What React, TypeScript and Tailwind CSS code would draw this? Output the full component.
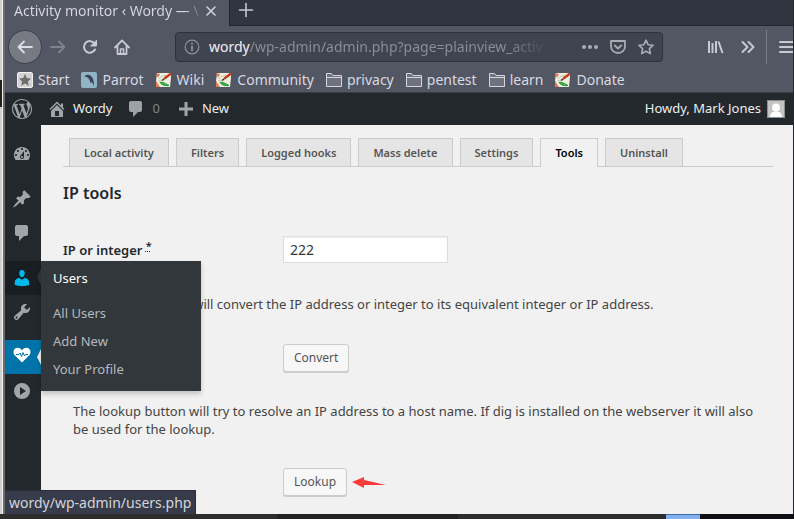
import type { ReactNode } from "react";

const ICON = {
  wordpress:
    "M20 10c0-5.51-4.49-10-10-10C4.48 0 0 4.49 0 10c0 5.52 4.48 10 10 10 5.51 0 10-4.48 10-10zM7.78 15.37L4.37 6.22c.55-.02 1.17-.08 1.17-.08.5-.06.44-1.13-.06-1.11 0 0-1.45.11-2.37.11-.18 0-.37 0-.58-.01C4.12 2.69 6.87 1.11 10 1.11c2.33 0 4.45.87 6.05 2.34-.68-.11-1.65.39-1.65 1.58 0 .74.45 1.36.9 2.1.35.61.55 1.36.55 2.46 0 1.49-1.4 5-1.4 5l-3.03-8.37c.54-.02.82-.17.82-.17.5-.05.44-1.25-.06-1.22 0 0-1.44.12-2.38.12-.87 0-2.33-.12-2.33-.12-.5-.03-.56 1.2-.06 1.22l.92.08 1.26 3.41zM17.41 10c.24-.64.74-1.87.43-4.25.7 1.29 1.05 2.71 1.05 4.25 0 3.29-1.73 6.24-4.4 7.78.97-2.59 1.94-5.2 2.92-7.78zM6.1 18.09C3.12 16.65 1.11 13.53 1.11 10c0-1.3.23-2.48.72-3.59C3.25 10.3 4.67 14.2 6.1 18.09zm4.03-6.63l2.58 6.98c-.86.29-1.76.45-2.71.45-.79 0-1.57-.11-2.29-.33.81-2.38 1.62-4.74 2.42-7.1z",
  home: "M16 8.5l1.53 1.53-1.06 1.06L10 4.6l-6.47 6.49-1.06-1.06L10 2.5l4 4v-2h2v4zm-6-2.46l6 5.99V18H4v-5.97zM12 17v-5H8v5h4z",
  comment:
    "M5 2h9c1.1 0 2 .9 2 2v7c0 1.1-.9 2-2 2h-2l-5 5v-5H5c-1.1 0-2-.9-2-2V4c0-1.1.9-2 2-2z",
  plus: "M17 8.5v3h-5.5V17h-3v-5.500H3v-3h5.500V3h3v5.500H17z",
  dashboard:
    "M3.76 16h12.48c1.1-1.37 1.76-3.11 1.76-5 0-4.42-3.58-8-8-8s-8 3.58-8 8c0 1.89.66 3.63 1.76 5zM10 4c.55 0 1 .45 1 1s-.45 1-1 1-1-.45-1-1 .45-1 1-1zM6 6c.55 0 1 .45 1 1s-.45 1-1 1-1-.45-1-1 .45-1 1-1zm8 0c.55 0 1 .45 1 1s-.45 1-1 1-1-.45-1-1 .45-1 1-1zm-5.37 5.55L12 7v6c0 1.1-.9 2-2 2s-2-.9-2-2c0-.57.24-1.08.63-1.45zM4 10c.55 0 1 .45 1 1s-.45 1-1 1-1-.45-1-1 .45-1 1-1zm12 0c.55 0 1 .45 1 1s-.45 1-1 1-1-.45-1-1 .45-1 1-1zm-5 3c0-.55-.45-1-1-1s-1 .45-1 1 .45 1 1 1 1-.45 1-1z",
  pin: "M10.44 3.02l1.82-1.82 6.36 6.35-1.83 1.82c-1.05-.68-2.48-.57-3.41.36l-.75.75c-.92.93-1.04 2.35-.35 3.41l-1.83 1.82-2.41-2.41-2.8 2.79c-.42.42-3.38 2.71-3.8 2.29s1.86-3.39 2.28-3.81l2.79-2.79L4.1 9.36l1.83-1.82c1.05.69 2.48.57 3.4-.36l.75-.75c.93-.92 1.05-2.35.36-3.41z",
  users:
    "M10 9.25c-2.27 0-2.73-3.44-2.73-3.44C7 4.02 7.82 2 9.97 2c2.16 0 2.98 2.02 2.71 3.81 0 0-.41 3.44-2.68 3.44zm0 2.57L12.72 10c2.39 0 4.52 2.33 4.52 4.53v2.49s-3.65 1.13-7.24 1.13c-3.65 0-7.24-1.13-7.24-1.13v-2.49c0-2.25 1.94-4.48 4.47-4.48z",
  tools:
    "M16.68 9.77c-1.34 1.34-3.3 1.67-4.95.99l-5.41 6.52c-.99.99-2.59.99-3.58 0s-.99-2.59 0-3.57l6.52-5.42c-.68-1.65-.35-3.61.99-4.95 1.28-1.28 3.12-1.62 4.72-1.06l-2.89 2.89 2.82 2.82 2.86-2.87c.53 1.58.18 3.39-1.08 4.65zM3.81 16.21c.4.39 1.04.39 1.43 0 .4-.4.4-1.04 0-1.43-.39-.4-1.03-.4-1.43 0-.39.39-.39 1.03 0 1.43z",
};

function Dash({ d, className = "size-5" }: { d: string; className?: string }) {
  return (
    <svg viewBox="0 0 20 20" fill="currentColor" className={`shrink-0 ${className}`} aria-hidden="true">
      <path d={d} fillRule="evenodd" />
    </svg>
  );
}

function Line({ children, className = "size-4", width = 2 }: { children: ReactNode; className?: string; width?: number }) {
  return (
    <svg
      viewBox="0 0 16 16"
      fill="none"
      stroke="currentColor"
      strokeWidth={width}
      strokeLinecap="round"
      strokeLinejoin="round"
      className={`shrink-0 ${className}`}
      aria-hidden="true"
    >
      {children}
    </svg>
  );
}

function StartIcon() {
  return (
    <svg viewBox="0 0 16 16" className="size-4 shrink-0" aria-hidden="true">
      <rect x="0.500" y="0.500" width="15" height="15" rx="1.500" fill="#d3d3d3" stroke="#f0f0f0" />
      <path d="M8 2l1.800 4 4.200.5-3.100 2.900.9 4.300L8 11.500l-3.800 2.200.9-4.300L2 6.500 6.200 6z" fill="#6e6e6e" />
    </svg>
  );
}

function ParrotIcon() {
  return (
    <svg viewBox="0 0 16 16" className="size-4 shrink-0" aria-hidden="true">
      <rect width="16" height="16" rx="2" fill="#8fb4c6" />
      <path d="M3 4.500c2-2 5-2.500 7-.5 2.500 2 3 6 3 10-.8-2-1.600-3.200-2.600-4l-.6 1.500C9 8.500 8 6.500 6.500 5.500 5.500 4.800 4 4.500 3 4.500z" fill="#3b4554" />
    </svg>
  );
}

function NoteIcon() {
  return (
    <svg viewBox="0 0 16 16" className="size-4 shrink-0" aria-hidden="true">
      <path d="M1 1h14v4l-1 10H2L0 9z" fill="#f1efe2" />
      <path d="M0 1l4 1-2 4zM0 9l4 6H0z" fill="#e87a4a" />
      <path d="M3 7c2-3 5-3 7-4M2.500 9c2-1 4-1 6-1" stroke="#b9c3a4" fill="none" />
      <path d="M15 1.500L8.500 6.500" stroke="#c5381d" strokeWidth="2.400" />
      <path d="M8.500 6.500L6 8.500" stroke="#4a2a1c" strokeWidth="1.400" />
      <path d="M4 10.500c3-1 6 1.500 9 3-3 .5-7 0-9-3z" fill="#42b84a" stroke="#1e9430" strokeWidth="1" />
    </svg>
  );
}

function FolderIcon() {
  return (
    <svg viewBox="0 0 16 16" className="size-4 shrink-0" aria-hidden="true">
      <path d="M.5 14.500v-13h5l1.500 2h8.500v11z" fill="#70737f" stroke="#d5d7de" strokeLinejoin="round" />
      <path d="M1 5.500h14" stroke="#d5d7de" />
    </svg>
  );
}

const BOOKMARKS: [string, () => ReactNode][] = [
  ["Start", StartIcon],
  ["Parrot", ParrotIcon],
  ["Wiki", NoteIcon],
  ["Community", NoteIcon],
  ["privacy", FolderIcon],
  ["pentest", FolderIcon],
  ["learn", FolderIcon],
  ["Donate", NoteIcon],
];

const TABS = ["Local activity", "Filters", "Logged hooks", "Mass delete", "Settings", "Tools", "Uninstall"];

function TabStrip() {
  return (
    <div className="flex h-[26px] bg-[#31353f]">
      <div className="flex w-56 shrink-0 items-start bg-[#535663] pl-[9px]">
        <span className="w-[189px] bg-linear-to-r from-[#d8dae2] from-90% to-[#535663] bg-clip-text text-[14px] leading-[21px] whitespace-nowrap text-transparent">
          Activity monitor ‹ Wordy — \
        </span>
        <button aria-label="Close tab" className="mt-[3px] grid size-4 place-items-center text-[#d0d2da]">
          <Line className="size-4" width={1.6}>
            <path d="M4 4l8 8M12 4l-8 8" />
          </Line>
        </button>
      </div>
      <div className="flex flex-1 items-start border-b border-l border-[#22252d]">
        <button aria-label="New tab" className="ml-2 mt-[2px] text-[#c5c8d0]">
          <Line width={1.6}>
            <path d="M8 1.500v13M1.500 8h13" />
          </Line>
        </button>
      </div>
    </div>
  );
}

function Toolbar() {
  return (
    <div className="flex h-[41px] items-center bg-[#535663] pl-[3px] text-[#c8cad2]">
      <button aria-label="Back" className="grid size-[34px] shrink-0 place-items-center rounded-full border border-[#3d404b] bg-[#777a83] text-[#dcdee4]">
        <Line width={1.8}>
          <path d="M15 8H1.500M7 2.500L1.500 8 7 13.500" />
        </Line>
      </button>
      <button aria-label="Forward" className="ml-2 text-[#7f828d]">
        <Line width={1.8}>
          <path d="M1 8h13.500M9 2.500L14.500 8 9 13.500" />
        </Line>
      </button>
      <button aria-label="Reload" className="ml-4">
        <Line>
          <path d="M13 10.500A5.800 5.800 0 1 1 12.500 4.500" />
          <path d="M14.500 1.500v5.500H9z" fill="currentColor" strokeWidth="1" />
        </Line>
      </button>
      <button aria-label="Home" className="ml-4">
        <Line width={1.8}>
          <path d="M1 8.500L8 1.500l7 7M3.500 7.500V15h9V7.500" />
          <path d="M6.500 14.500v-4.500h3v4.500" strokeWidth="1.500" />
        </Line>
      </button>
      <div className="ml-[45px] flex h-[30px] min-w-0 flex-1 items-center rounded border border-[#2e313b] bg-[#40444f] px-2">
        <Line className="size-4 text-[#8f929c]" width={1.2}>
          <circle cx="8" cy="8" r="6.800" />
          <path d="M8 7.500v4M8 4.500v.3" strokeWidth="1.800" />
        </Line>
        <span className="ml-[9px] min-w-0 flex-1 bg-linear-to-r from-[#8b8f99] from-88% to-[#40444f] bg-clip-text text-[14px] leading-6 whitespace-nowrap text-transparent">
          <span className="text-[#e0e2e8]">wordy</span>/wp-admin/admin.php?page=plainview_activ
        </span>
        <span className="ml-[34px] flex items-center gap-3 text-[#a9acb5]">
          <button aria-label="Page actions">
            <svg viewBox="0 0 16 16" className="size-4" fill="currentColor" aria-hidden="true">
              <circle cx="2" cy="8" r="2" />
              <circle cx="8" cy="8" r="2" />
              <circle cx="14" cy="8" r="2" />
            </svg>
          </button>
          <button aria-label="Save to Pocket">
            <Line width={1.8}>
              <path d="M1 2h14v5.500a7 6.500 0 0 1-14 0zM4.800 6.500L8 9.500l3.200-3" />
            </Line>
          </button>
          <button aria-label="Bookmark">
            <Line width={1.6}>
              <path d="M8 1.200l2.100 4.500 4.900.6-3.600 3.400.9 4.900L8 12.200l-4.300 2.400.9-4.900L1 6.300l4.900-.6z" />
            </Line>
          </button>
        </span>
      </div>
      <button aria-label="Library" className="ml-[45px]">
        <Line>
          <path d="M1 2v12M4.500 4v10M8 2v12M10.500 2.500L14.500 14" strokeLinecap="butt" />
        </Line>
      </button>
      <button aria-label="More tools" className="ml-4">
        <Line>
          <path d="M2.500 3l5 5-5 5M8.500 3l5 5-5 5" />
        </Line>
      </button>
      <button aria-label="Menu" className="ml-2.5 flex h-[34px] w-[27px] items-center overflow-hidden border-l border-[#7b7e89] pl-3">
        <Line>
          <path d="M1 3h14M1 8h14M1 13h14" />
        </Line>
      </button>
    </div>
  );
}

function BookmarkBar() {
  return (
    <nav aria-label="Bookmarks" className="flex h-[26px] items-center gap-3 border-b border-[#3b3e49] bg-[#535663] pl-3 text-[14px] leading-6 text-[#d8dae2]">
      {BOOKMARKS.map(([name, Icon]) => (
        <a key={name} href="#" className="flex items-center gap-[5px] whitespace-nowrap">
          <Icon />
          {name}
        </a>
      ))}
    </nav>
  );
}

function AdminBar() {
  return (
    <header className="flex h-8 items-center bg-[#23282d] pr-2 pl-[7px] text-[13px] text-[#eeeeee]">
      <a href="#" aria-label="WordPress" className="text-[#a0a5aa]">
        <Dash d={ICON.wordpress} />
      </a>
      <a href="#" className="ml-[15px] flex items-center gap-[6px]">
        <Dash d={ICON.home} className="size-5 text-[#a0a5aa]" />
        Wordy
      </a>
      <a href="#" className="ml-[14px] flex items-center gap-[6px] text-[#9ca2a7]">
        <Dash d={ICON.comment} />
        <span className="text-[#7d8388]">0</span>
      </a>
      <a href="#" className="ml-4 flex items-center gap-[6px]">
        <Dash d={ICON.plus} className="size-5 text-[#a0a5aa]" />
        New
      </a>
      <a href="#" className="ml-auto flex items-center gap-[6px] whitespace-nowrap">
        Howdy, Mark Jones
        <svg viewBox="0 0 18 18" className="size-[18px]" aria-hidden="true">
          <rect x="0.500" y="0.500" width="17" height="17" fill="#c4c4c4" stroke="#8c8f94" />
          <circle cx="9" cy="7.500" r="4" fill="#fff" />
          <path d="M3 17c0-4 2.500-5.500 6-5.500s6 1.500 6 5.500z" fill="#fff" />
        </svg>
      </a>
    </header>
  );
}

const MENU_ITEM = "flex h-[34px] items-center pl-[7px]";

function SideMenu() {
  return (
    <nav aria-label="Admin" className="flex w-9 shrink-0 flex-col bg-[#23282d] pt-3 text-[#a0a5aa]">
      <a href="#" aria-label="Dashboard" className={MENU_ITEM}>
        <Dash d={ICON.dashboard} />
      </a>
      <a href="#" aria-label="Posts" className={`mt-[11px] ${MENU_ITEM}`}>
        <Dash d={ICON.pin} />
      </a>
      <a href="#" aria-label="Comments" className={MENU_ITEM}>
        <Dash d={ICON.comment} />
      </a>
      <div className="relative mt-[11px]">
        <a href="#" aria-label="Users" className={`bg-[#191e23] text-[#00b9eb] ${MENU_ITEM}`}>
          <Dash d={ICON.users} />
        </a>
        <span className="absolute top-2 right-0 size-0 border-y-8 border-r-4 border-y-transparent border-r-[#32373c]" />
        <div className="absolute top-0 left-full z-10 flex h-[130px] w-40 flex-col bg-[#32373c] pl-3 shadow-[0_3px_5px_rgba(0,0,0,0.2)]">
          <a href="#" className="py-2 text-[13px] leading-[18px] text-white">
            Users
          </a>
          <div className="mt-1 flex flex-col text-[13px] leading-7 text-[#b4b9be]">
            <a href="#">All Users</a>
            <a href="#">Add New</a>
            <a href="#">Your Profile</a>
          </div>
        </div>
      </div>
      <a href="#" aria-label="Tools" className={MENU_ITEM}>
        <Dash d={ICON.tools} />
      </a>
      <a href="#" aria-label="Activity monitor" className={`relative mt-[11px] bg-[#0073aa] pb-1 text-white ${MENU_ITEM}`}>
        <svg viewBox="-1 0 20 16" className="h-4 w-5" aria-hidden="true">
          <path d="M9 15.500L1.500 8C-.5 5.500.5 1 4.500.8 6.500.7 8 1.800 9 3.500 10 1.800 11.500.7 13.500.8c4 .2 5 4.700 3 7.200z" fill="currentColor" />
          <path d="M3 7.500h3l1.200-1.500L8.500 9.500l1.500-4L11.500 9l1-1.500H15" fill="none" stroke="#0073aa" />
        </svg>
        <span className="absolute top-[9px] right-0 size-0 border-y-8 border-r-4 border-y-transparent border-r-[#f1f1f1]" />
      </a>
      <a href="#" aria-label="Collapse menu" className={MENU_ITEM}>
        <svg viewBox="-2 -2 20 20" className="size-5" aria-hidden="true">
          <path d="M8 0a8 8 0 1 0 0 16A8 8 0 0 0 8 0zM6 4l6 4-6 4z" fill="currentColor" fillRule="evenodd" />
        </svg>
      </a>
    </nav>
  );
}

const BUTTON =
  "h-7 rounded-[3px] border border-[#cccccc] bg-[#f7f7f7] px-[10px] text-[12px] text-[#555555] shadow-[0_1px_0_#cccccc]";

function Content() {
  return (
    <main className="min-w-0 flex-1 bg-[#f1f1f1] pr-5 pl-[22px] text-[13px] leading-[18px] text-[#444444]">
      <nav aria-label="Sections" className="mt-[13px] flex gap-[7px] border-b border-[#cccccc] pl-[6px]">
        {TABS.map((name) => (
          <a
            key={name}
            href="#"
            className={
              name === "Tools"
                ? "-mb-px border border-b-0 border-[#cccccc] bg-[#f1f1f1] px-[14px] pt-[5px] pb-[5px] text-[11px] font-semibold whitespace-nowrap text-black"
                : "border border-b-0 border-[#cccccc] bg-[#e5e5e5] px-[14px] pt-[5px] pb-1 text-[11px] font-semibold whitespace-nowrap text-[#555555]"
            }
          >
            {name}
          </a>
        ))}
      </nav>
      <h1 className="mt-[14px] text-[16px] leading-6 font-semibold text-[#23282d]">IP tools</h1>
      <div className="mt-[31px] flex items-center">
        <label htmlFor="ip" className="w-[220px] font-semibold text-[#23282d]">
          IP or integer <abbr title="Required" className="align-super text-[11px] leading-none">*</abbr>
        </label>
        <input
          id="ip"
          defaultValue="222"
          className="h-[27px] w-[165px] border border-[#dddddd] bg-white px-[6px] text-[14px] text-[#32373c] shadow-[inset_0_1px_2px_rgba(0,0,0,0.07)]"
        />
      </div>
      <p className="mt-8 px-[10px]">
        The convert button will convert the IP address or integer to its equivalent integer or IP address.
      </p>
      <div className="mt-[31px] pl-[220px]">
        <button className={BUTTON}>Convert</button>
      </div>
      <p className="mt-[30px] px-[10px]">
        The lookup button will try to resolve an IP address to a host name. If dig is installed on the webserver it will also be used for the lookup.
      </p>
      <div className="mt-[30px] mb-[17px] flex items-center gap-[5px] pl-[220px]">
        <button className={BUTTON}>Lookup</button>
        <svg viewBox="0 0 34 13" className="h-[13px] w-[34px]" aria-hidden="true">
          <path d="M0 6L12 1v3l22 5-22 0v3z" fill="#fb3a3a" />
        </svg>
      </div>
    </main>
  );
}

export default function App() {
  return (
    <div className="flex min-h-screen flex-col bg-[#2b2b2b] font-['Noto_Sans','Open_Sans',sans-serif]">
      <div className="flex flex-1">
        <div className="flex w-[5px] shrink-0">
          <div className="flex w-[2px] flex-col bg-[#d0d0d0]">
            <span className="mt-20 h-[27px] bg-[#24231a]" />
          </div>
          <div className="w-px bg-[#f0f0f0]" />
          <div className="w-[2px] bg-[#6c6c6c]" />
        </div>
        <div className="relative flex min-w-0 flex-1 flex-col border-r border-[#22252d]">
          <TabStrip />
          <Toolbar />
          <BookmarkBar />
          <AdminBar />
          <div className="flex flex-1">
            <SideMenu />
            <Content />
          </div>
          <div className="absolute bottom-0 left-0 border-t border-r border-[#2b2d3a] bg-[#383b4a] px-1 text-[14px] leading-[23px] text-[#d3d5de]">
            wordy/wp-admin/users.php
          </div>
        </div>
      </div>
      <div className="flex h-[5px] bg-[#2d2d2d]">
        <span className="ml-[277px] w-[181px] bg-[#222222]" />
        <span className="ml-auto w-[34px] border-t border-[#3f6ba8] bg-[#82b1ee]" />
        <span className="w-[94px] bg-[#0f0f15]" />
      </div>
    </div>
  );
}
